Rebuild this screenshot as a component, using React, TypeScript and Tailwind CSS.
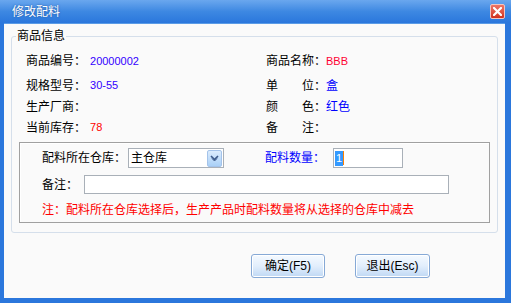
export default function App() {
  return (
    <div className="w-[511px] h-[303px] flex flex-col bg-[#2b77dc] font-['Liberation_Sans','Noto_Sans_CJK_SC',sans-serif] text-[12px] text-black overflow-hidden">
      <div className="h-[23px] shrink-0 flex items-center justify-between pl-[12px] pr-[6px] bg-gradient-to-b from-[#6aa7ee] via-[#3d88e2] to-[#2a77dc]">
        <span className="text-white text-[12px] leading-[14px] [text-shadow:0_0_2px_#1a4e9a]">修改配料</span>
        <div className="w-[15px] h-[15px] rounded-[2px] border border-[#f3c4bf] bg-gradient-to-b from-[#ee7565] to-[#d0301c] flex items-center justify-center">
          <svg width="9" height="9" viewBox="0 0 9 9">
            <path d="M1 1 L8 8 M8 1 L1 8" stroke="#fff" strokeWidth="2.2" strokeLinecap="square" />
          </svg>
        </div>
      </div>
      <div className="flex-1 ml-[4px] mr-[6px] mb-[5px] bg-[#fafafa] flex flex-col border-t border-[#5a9be6]">
        <div className="relative mt-[12px] mx-[7px] h-[197px] border border-[#d5dfeb] rounded-[3px] flex flex-col">
          <span className="absolute -top-[8px] left-[4px] px-[1px] bg-[#fafafa] leading-[14px] text-[12px]">商品信息</span>
          <div className="flex flex-col pl-[14px] pt-[14px]">
            <div className="flex h-[20px] items-center">
              <div className="w-[240px] flex items-center">
                <span>商品编号：</span>
                <span className="ml-[4px] text-[11px] text-[#3300ff]">20000002</span>
              </div>
              <div className="flex items-center">
                <span>商品名称：</span>
                <span className="text-[11px] text-[#ff0033]">BBB</span>
              </div>
            </div>
            <div className="flex h-[21px] mt-[4px] items-center">
              <div className="w-[240px] flex items-center">
                <span>规格型号：</span>
                <span className="ml-[4px] text-[11px] text-[#3300ff]">30-55</span>
              </div>
              <div className="flex items-center">
                <span>单　　位：</span>
                <span className="text-[#0000ff]">盒</span>
              </div>
            </div>
            <div className="flex h-[21px] items-center">
              <div className="w-[240px] flex items-center">
                <span>生产厂商：</span>
              </div>
              <div className="flex items-center">
                <span>颜　　色：</span>
                <span className="text-[#0000ff]">红色</span>
              </div>
            </div>
            <div className="flex h-[21px] items-center">
              <div className="w-[240px] flex items-center">
                <span>当前库存：</span>
                <span className="ml-[4px] text-[11px] text-[#ff0000]">78</span>
              </div>
              <div className="flex items-center">
                <span>备　　注：</span>
              </div>
            </div>
          </div>
          <div className="mt-[4px] mx-[7px] h-[81px] border border-[#a0a0a0] shadow-[inset_1px_1px_0_#ffffff] flex flex-col pl-[22px] pt-[5px]">
            <div className="flex items-center h-[20px]">
              <span>配料所在仓库：</span>
              <div className="ml-[2px] w-[96px] h-[20px] border border-[#a9b0b8] bg-white flex items-center pl-[2px]">
                <span className="flex-1">主仓库</span>
                <div className="w-[15px] h-[17px] mr-[1px] rounded-[2px] border border-[#a4c3ea] bg-gradient-to-b from-[#dcecfd] to-[#a9d0f7] flex items-center justify-center">
                  <svg width="9" height="7" viewBox="0 0 9 7">
                    <path d="M1 1 L4.5 4.5 L8 1" stroke="#3d5a8a" strokeWidth="1.6" fill="none" />
                    <path d="M2 3.5 L4.5 6 L7 3.5" stroke="#3d5a8a" strokeWidth="1" fill="none" />
                  </svg>
                </div>
              </div>
              <span className="ml-[41px] text-[#0000ff]">配料数量：</span>
              <div className="ml-[8px] w-[70px] h-[20px] border border-[#a9b0b8] bg-white flex items-center pl-[1px]">
                <span className="bg-[#3399ff] text-white text-[11px] leading-[15px] px-[1px]">1</span>
                <span className="w-[1px] h-[14px] bg-[#ff8000]" />
              </div>
            </div>
            <div className="flex items-center mt-[7px] h-[19px]">
              <span>备注：</span>
              <div className="ml-[6px] w-[365px] h-[19px] border border-[#a9b0b8] bg-white" />
            </div>
            <div className="mt-[8px] h-[16px] flex items-center text-[#ff0000]">
              注：配料所在仓库选择后，生产产品时配料数量将从选择的仓库中减去
            </div>
          </div>
        </div>
        <div className="mt-[21px] flex justify-end gap-[30px] pr-[75px]">
          <div className="w-[74px] h-[24px] rounded-[3px] border border-[#86a9d6] bg-gradient-to-b from-[#f5faff] via-[#e2eefc] to-[#bfd8f4] flex items-center justify-center shadow-[inset_0_0_0_1px_#ffffff]">
            确定(F5)
          </div>
          <div className="w-[75px] h-[24px] rounded-[3px] border border-[#86a9d6] bg-gradient-to-b from-[#f5faff] via-[#e2eefc] to-[#bfd8f4] flex items-center justify-center shadow-[inset_0_0_0_1px_#ffffff]">
            退出(Esc)
          </div>
        </div>
      </div>
    </div>
  );
}
